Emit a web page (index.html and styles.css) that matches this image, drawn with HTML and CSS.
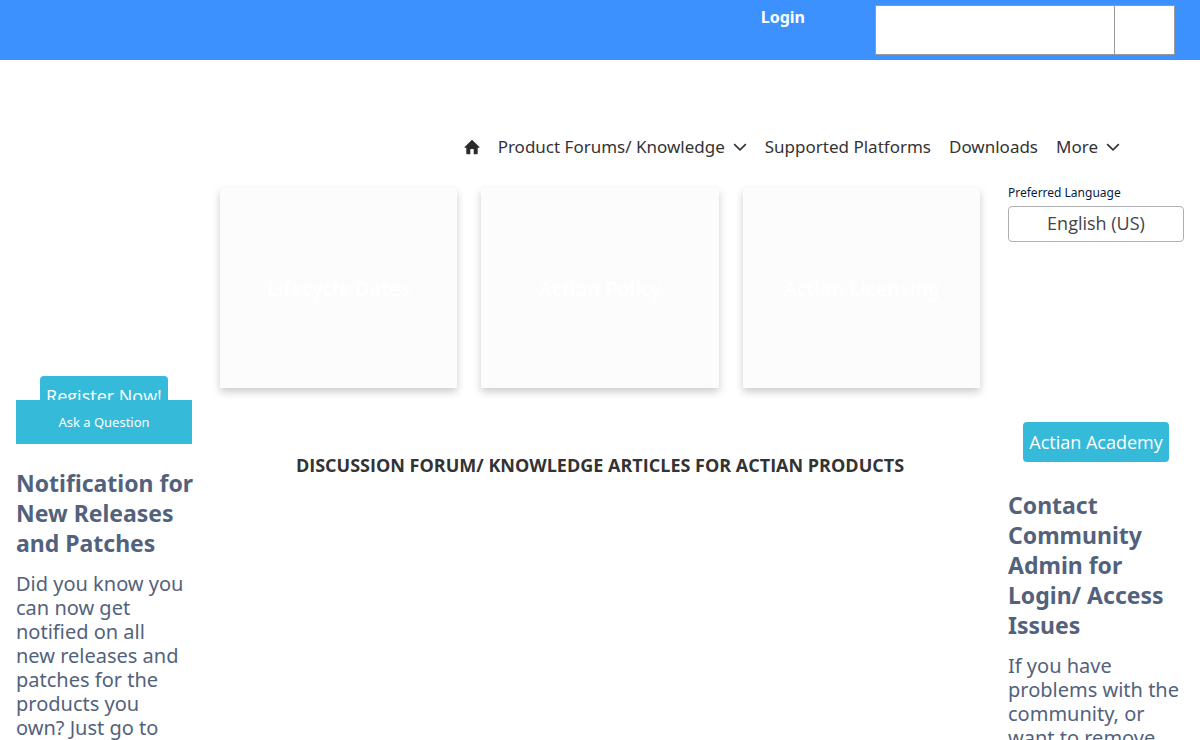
FILE: index.html
```html
<!DOCTYPE html>
<html lang="en">
<head>
<meta charset="utf-8">
<title>Actian Community</title>
<link rel="stylesheet" href="styles.css">
</head>
<body>
<header class="topbar">
  <a class="login" href="#">Login</a>
  <form class="search" role="search">
    <input class="search-input" type="search" aria-label="Search">
    <button class="search-button" type="button" aria-label="Submit search"></button>
  </form>
</header>
<nav class="nav" aria-label="Main">
  <a class="nav-item" href="#" aria-label="Home">
    <svg class="home" viewBox="0 0 16 16" aria-hidden="true"><path d="M8 .7.6 8.1c-.3.3-.1.7.3.7h1.4v5.7c0 .5.3.8.8.8h3.2v-4.8c0-.4.2-.6.6-.6h2.2c.4 0 .6.2.6.6v4.8h3.2c.5 0 .8-.3.8-.8V8.8h1.4c.4 0 .6-.4.3-.7z"/></svg>
  </a>
  <button class="nav-item" type="button">Product Forums/ Knowledge
    <svg class="chevron" viewBox="0 0 12 12" aria-hidden="true"><path d="M1 3.5 6 8.5 11 3.5"/></svg>
  </button>
  <a class="nav-item" href="#">Supported Platforms</a>
  <a class="nav-item" href="#">Downloads</a>
  <button class="nav-item" type="button">More
    <svg class="chevron" viewBox="0 0 12 12" aria-hidden="true"><path d="M1 3.5 6 8.5 11 3.5"/></svg>
  </button>
</nav>
<main class="columns">
  <aside class="side side-left">
    <a class="pill" href="#">Register Now!</a>
    <button class="ask" type="button">Ask a Question</button>
    <h2 class="side-title">Notification for New Releases and Patches</h2>
    <p class="side-text">Did you know you can now get notified on all new releases and patches for the products you own? Just go to</p>
  </aside>
  <section class="center">
    <div class="tiles">
      <a class="tile" href="#">Lifecycle Dates</a>
      <a class="tile" href="#">Actian Policy</a>
      <a class="tile" href="#">Actian Licensing</a>
    </div>
    <h1 class="forum-title">DISCUSSION FORUM/ KNOWLEDGE ARTICLES FOR ACTIAN PRODUCTS</h1>
  </section>
  <aside class="side side-right">
    <label class="lang-label" for="lang">Preferred Language</label>
    <select class="lang" id="lang"><option>English (US)</option></select>
    <a class="pill academy" href="#">Actian Academy</a>
    <h2 class="side-title">Contact Community Admin for Login/ Access Issues</h2>
    <p class="side-text">If you have problems with the community, or want to remove</p>
  </aside>
</main>
</body>
</html>
```
FILE: styles.css
```css
* {
  box-sizing: border-box;
}

body {
  display: flex;
  flex-direction: column;
  height: 100vh;
  margin: 0;
  overflow: hidden;
  background: #fff;
  color: #333;
  font-family: "Noto Sans", "Open Sans", sans-serif;
  font-size: 17px;
}

a {
  color: inherit;
  text-decoration: none;
}

button,
input,
select {
  margin: 0;
  border-radius: 0;
  color: inherit;
  font: inherit;
}

.topbar {
  display: flex;
  flex: none;
  justify-content: flex-end;
  gap: 70px;
  height: 60px;
  padding: 5px 25px;
  background: #3c91ff;
}

.login {
  color: #fff;
  font-size: 16px;
  font-weight: 700;
  line-height: 24px;
}

.search {
  display: flex;
  width: 300px;
}

.search-input {
  flex: 1;
  min-width: 0;
  padding: 0 12px;
  border: 1px solid #999;
  background: #fff;
}

.search-button {
  width: 60px;
  border: 1px solid #999;
  border-left: 0;
  background: #fff;
}

.nav {
  display: flex;
  flex: none;
  justify-content: flex-end;
  gap: 18px;
  padding: 72px 80px 0 16px;
}

.nav-item {
  display: flex;
  align-items: center;
  gap: 8px;
  height: 28px;
  padding: 0;
  border: 0;
  background: none;
  white-space: nowrap;
}

.home {
  width: 16px;
  height: 16px;
  margin-top: 2px;
  fill: #2b2b2b;
}

.chevron {
  width: 14px;
  height: 14px;
  margin-top: 2px;
  fill: none;
  stroke: #333;
  stroke-width: 1.4;
}

.columns {
  display: grid;
  flex: 1;
  grid-template-columns: 208px minmax(0, 1fr) 208px;
  min-height: 0;
  padding-top: 24px;
}

.side {
  display: flex;
  flex-direction: column;
  padding: 0 16px;
  color: #53627c;
}

.side-left {
  padding-top: 192px;
}

.pill {
  align-self: center;
  flex: none;
  padding: 0 6px;
  border-radius: 4px;
  background: #36bad9;
  color: #fff;
  font-family: "Open Sans", "Noto Sans", sans-serif;
  font-size: 18px;
  line-height: 40px;
}

.ask {
  position: relative;
  flex: none;
  height: 44px;
  margin-top: -16px;
  border: 0;
  background: #36bad9;
  color: #fff;
  font-size: 13px;
}

.side-title {
  margin: 24px -8px 14px 0;
  font-size: 23px;
  font-weight: 700;
  line-height: 30px;
}

.side-text {
  margin: 0;
  font-size: 20px;
  line-height: 24px;
}

.side-left .side-text {
  padding-right: 8px;
}

.center {
  padding: 4px 12px 0;
}

.tiles {
  display: grid;
  grid-template-columns: repeat(3, minmax(0, 1fr));
  gap: 24px;
}

.tile {
  display: flex;
  align-items: center;
  justify-content: center;
  height: 200px;
  background: #fcfcfc;
  box-shadow: 0 4px 8px rgba(0, 0, 0, 0.2);
  color: #fff;
  font-family: "Open Sans", "Noto Sans", sans-serif;
  font-size: 20px;
  font-weight: 600;
}

.forum-title {
  margin: 64px 0 0;
  font-family: "Open Sans", "Noto Sans", sans-serif;
  font-size: 18px;
  font-weight: 700;
  line-height: 26px;
  text-align: center;
}

.lang-label {
  color: #061c3f;
  font-size: 12px;
  line-height: 18px;
}

.lang {
  flex: none;
  height: 36px;
  margin-top: 4px;
  padding: 0 0 2px;
  border: 1px solid #b0b0b4;
  border-radius: 4px;
  appearance: none;
  background: #fff;
  color: #444;
  font-family: "Open Sans", "Noto Sans", sans-serif;
  font-size: 18px;
  text-align-last: center;
}

.academy {
  margin: 180px 0 4px;
}
```
